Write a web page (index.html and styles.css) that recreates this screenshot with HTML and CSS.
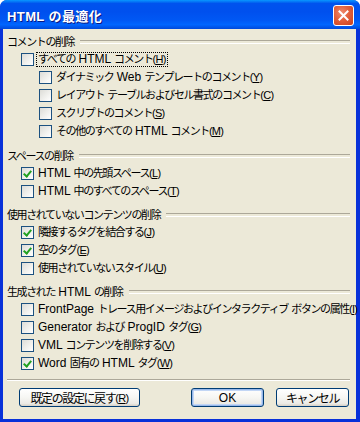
FILE: index.html
```html
<!DOCTYPE html>
<html lang="ja">
<head>
  <meta charset="UTF-8" />
  <title>HTML の最適化</title>
  <link rel="stylesheet" href="styles.css">
</head>
<body>
  <div class="window">
    <!-- Title bar -->
    <div class="titlebar">
      <span class="title">HTML の最適化</span>
      <span class="close">
        <svg width="11" height="11" viewBox="0 0 11 11"><path d="M1.5 1.5 L9.5 9.5 M9.5 1.5 L1.5 9.5" stroke="#fff" stroke-width="2" stroke-linecap="square"/></svg>
      </span>
    </div>

    <div class="client">
      <div class="group">
        <div class="group-title"><span>コメントの削除</span></div>
        <div class="row"><span class="box"></span><span class="text focus">すべての<span class="en"> HTML </span>コメント<span class="key">(<u>H</u>)</span></span></div>
        <div class="row indent"><span class="box"></span><span class="text">ダイナミック<span class="en"> Web </span>テンプレートのコメント<span class="key">(<u>Y</u>)</span></span></div>
        <div class="row indent"><span class="box"></span><span class="text">レイアウト<span class="en"> </span>テーブルおよびセル書式のコメント<span class="key">(<u>C</u>)</span></span></div>
        <div class="row indent"><span class="box"></span><span class="text">スクリプトのコメント<span class="key">(<u>S</u>)</span></span></div>
        <div class="row indent"><span class="box"></span><span class="text">その他のすべての<span class="en"> HTML </span>コメント<span class="key">(<u>M</u>)</span></span></div>
      </div>

      <div class="group">
        <div class="group-title"><span>スペースの削除</span></div>
        <div class="row"><span class="box checked"></span><span class="text"><span class="en">HTML </span>中の先頭スペース<span class="key">(<u>L</u>)</span></span></div>
        <div class="row"><span class="box"></span><span class="text"><span class="en">HTML </span>中のすべてのスペース<span class="key">(<u>T</u>)</span></span></div>
      </div>

      <div class="group">
        <div class="group-title"><span>使用されていないコンテンツの削除</span></div>
        <div class="row"><span class="box checked"></span><span class="text">隣接するタグを結合する<span class="key">(<u>J</u>)</span></span></div>
        <div class="row"><span class="box checked"></span><span class="text">空のタグ<span class="key">(<u>E</u>)</span></span></div>
        <div class="row"><span class="box"></span><span class="text">使用されていないスタイル<span class="key">(<u>U</u>)</span></span></div>
      </div>

      <div class="group">
        <div class="group-title"><span>生成された<span class="en"> HTML </span>の削除</span></div>
        <div class="row"><span class="box"></span><span class="text"><span class="en">FrontPage </span>トレース用イメージおよびインタラクティブ<span class="en"> </span>ボタンの属性<span class="key">(<u>I</u>)</span></span></div>
        <div class="row"><span class="box"></span><span class="text"><span class="en">Generator </span>および<span class="en"> ProgID </span>タグ<span class="key">(<u>G</u>)</span></span></div>
        <div class="row"><span class="box"></span><span class="text"><span class="en">VML </span>コンテンツを削除する<span class="key">(<u>V</u>)</span></span></div>
        <div class="row"><span class="box checked"></span><span class="text"><span class="en">Word </span>固有の<span class="en"> HTML </span>タグ<span class="key">(<u>W</u>)</span></span></div>
      </div>

      <div class="separator"></div>

      <div class="buttons">
        <span class="btn wide">既定の設定に戻す<span class="key">(<u>R</u>)</span></span>
        <span class="spacer"></span>
        <span class="btn default"><span class="en">OK</span></span>
        <span class="btn">キャンセル</span>
      </div>
    </div>
  </div>
</body>
</html>
```

FILE: styles.css
```css
/* ---------- Global ---------- */
* {
  box-sizing: border-box;
}
body {
  margin: 0;
  background: #fff;
  font-family: "Liberation Sans", "Noto Sans CJK JP", sans-serif;
  font-size: 11px;
  letter-spacing: -1.4px;
  color: #000;
}
/* latin words keep their natural width */
.en {
  font-size: 12px;
  letter-spacing: 0;
}
/* access key, e.g. (H) */
.key {
  font-size: 11px;
  letter-spacing: -0.7px;
}

/* ---------- Window frame ---------- */
.window {
  width: 360px;
  height: 422px;
  display: flex;
  flex-direction: column;
  background: #0831d9;
  border-radius: 7px 7px 0 0;
  overflow: hidden;
}
.titlebar {
  height: 29px;
  flex: none;
  display: flex;
  align-items: center;
  padding: 0 6px 0 7px;
  background: linear-gradient(#0997ff 0%, #0053ee 12%, #0050ee 40%, #0058f4 70%, #0066ff 85%, #0049da 100%);
}
.title {
  flex: 1;
  color: #fff;
  font-weight: bold;
  font-size: 13px;
  letter-spacing: 0.4px;
  text-shadow: 1px 1px 0 #0a1883;
  padding-top: 1px;
}
.close {
  width: 21px;
  height: 21px;
  margin-top: 1px;
  display: flex;
  align-items: center;
  justify-content: center;
  border: 1px solid #fff;
  border-radius: 3px;
  background: radial-gradient(circle at 40% 35%, #ef8c6f 0%, #e2603c 45%, #c9401c 100%);
}
.client {
  flex: 1;
  margin: 0 4px 3px 3px;
  background: #ece9d8;
  padding: 3px 6px 0 4px;
  display: flex;
  flex-direction: column;
}

/* ---------- Groups ---------- */
.group + .group {
  margin-top: 5px;
}
.group:nth-child(2) {
  margin-top: 6px;
}
.group-title {
  height: 18px;
  display: flex;
  align-items: center;
  gap: 6px;
}
.group-title::after {
  content: "";
  flex: 1;
  height: 2px;
  margin-top: 2px;
  border-top: 1px solid #aca899;
  border-bottom: 1px solid #fff;
}
.row {
  height: 18px;
  display: flex;
  align-items: center;
  padding-left: 14px;
  white-space: nowrap;
}
.row.indent {
  padding-left: 32px;
}
.box {
  width: 13px;
  height: 13px;
  flex: none;
  border: 1px solid #1c5180;
  background: linear-gradient(135deg, #dcdcd7 0%, #f2f2ef 60%, #fff 100%);
  margin-right: 2px;
  margin-top: 1px;
  position: relative;
}
.box.checked::after {
  content: "";
  position: absolute;
  left: 2px;
  top: 1px;
  width: 3px;
  height: 6px;
  border-right: 2px solid #21a121;
  border-bottom: 2px solid #21a121;
  transform: translate(1px, 0) rotate(40deg);
}
.text {
  padding: 0 1px;
  line-height: 13px;
  border: 1px dotted transparent;
}
.text.focus {
  border-color: #000;
}
u {
  text-decoration: underline;
  text-underline-offset: 1px;
}

/* ---------- Footer ---------- */
.separator {
  height: 2px;
  margin-top: 7px;
  border-top: 1px solid #aca899;
  border-bottom: 1px solid #fff;
}
.buttons {
  display: flex;
  gap: 12px;
  margin-top: 7px;
  padding: 0 1px 0 12px;
}
.spacer {
  flex: 1;
}
.btn {
  width: 73px;
  height: 19px;
  display: flex;
  align-items: center;
  justify-content: center;
  border: 1px solid #003c74;
  border-radius: 3px;
  background: linear-gradient(#fff 0%, #f6f6f3 50%, #ecebe6 85%, #d6d0c5 100%);
  font-size: 12px;
  white-space: nowrap;
}
.btn.wide {
  width: 121px;
}
.btn.default {
  box-shadow: inset 0 0 0 1px #98b8ea, inset 0 0 0 2px #c2d6f5;
}
```
